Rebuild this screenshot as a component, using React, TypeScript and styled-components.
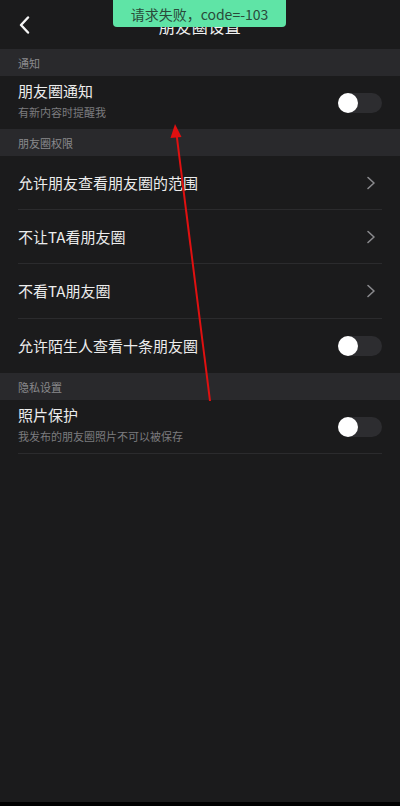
import React from "react";
import styled, { createGlobalStyle } from "styled-components";

const Global = createGlobalStyle`
  html, body { margin: 0; padding: 0; background: #000; }
  body { font-family: "Noto Sans CJK SC", "Noto Sans", sans-serif; -webkit-font-smoothing: antialiased; }
  * { box-sizing: border-box; }
`;

const Page = styled.div`
  position: relative;
  width: 400px;
  height: 802px;
  background: #1b1b1c;
  overflow: hidden;
`;

const Header = styled.div`
  height: 49px;
  display: flex;
  align-items: center;
  justify-content: center;
  position: relative;
  color: #f2f2f2;
  font-size: 16px;
`;

const Back = styled.div`
  position: absolute;
  left: 18px;
  top: 15px;
  width: 16px;
  height: 20px;
  display: flex;
  align-items: center;
`;

const Title = styled.div`
  margin-top: 2px;
  letter-spacing: 0.5px;
`;

const SectionHead = styled.div`
  height: 27px;
  background: #29292c;
  color: #8a8a8d;
  font-size: 11px;
  display: flex;
  align-items: center;
  padding-left: 18px;
`;

const Row = styled.div<{ $h: number; $divider?: boolean }>`
  height: ${(p) => p.$h}px;
  margin: 0 18px;
  display: flex;
  align-items: center;
  justify-content: space-between;
  border-bottom: ${(p) => (p.$divider ? "1px solid #2b2b2d" : "none")};
`;

const Texts = styled.div`
  display: flex;
  flex-direction: column;
  gap: 4px;
  margin-bottom: 6px;
`;

const RowTitle = styled.div`
  color: #ececec;
  font-size: 15px;
  line-height: 20px;
`;

const Sub = styled.div`
  color: #7c7c7f;
  font-size: 11px;
  line-height: 14px;
`;

const Track = styled.div`
  width: 44px;
  height: 20px;
  border-radius: 10px;
  background: #2d2d30;
  display: flex;
  align-items: center;
`;

const Knob = styled.div`
  width: 20px;
  height: 20px;
  border-radius: 50%;
  background: #ffffff;
`;

const ChevronBox = styled.div`
  margin-right: 6px;
  display: flex;
  align-items: center;
`;

const Toast = styled.div`
  position: absolute;
  left: 113px;
  top: 0;
  width: 173px;
  height: 27px;
  background: #5fe4a6;
  border-radius: 0 0 4px 4px;
  color: #2a4a3a;
  font-size: 14px;
  display: flex;
  align-items: center;
  justify-content: center;
  font-family: "Noto Sans CJK SC", "Noto Sans", sans-serif;
`;

const Overlay = styled.svg`
  position: absolute;
  left: 0;
  top: 0;
  pointer-events: none;
`;

const Toggle = () => (
  <Track>
    <Knob />
  </Track>
);

const Chevron = () => (
  <ChevronBox>
    <svg width="10" height="14" viewBox="0 0 10 14">
      <path d="M2 1.5 L8 7 L2 12.5" fill="none" stroke="#8a8a8d" strokeWidth="1.6" strokeLinecap="round" strokeLinejoin="round" />
    </svg>
  </ChevronBox>
);

export default function App() {
  return (
    <>
      <Global />
      <Page>
        <Header>
          <Back>
            <svg width="12" height="18" viewBox="0 0 12 18">
              <path d="M10 1.5 L3 9 L10 16.5" fill="none" stroke="#f5f5f5" strokeWidth="2.4" strokeLinecap="round" strokeLinejoin="round" />
            </svg>
          </Back>
          <Title>朋友圈设置</Title>
        </Header>

        <SectionHead>通知</SectionHead>
        <Row $h={53}>
          <Texts>
            <RowTitle>朋友圈通知</RowTitle>
            <Sub>有新内容时提醒我</Sub>
          </Texts>
          <Toggle />
        </Row>

        <SectionHead>朋友圈权限</SectionHead>
        <Row $h={54} $divider>
          <RowTitle>允许朋友查看朋友圈的范围</RowTitle>
          <Chevron />
        </Row>
        <Row $h={54} $divider>
          <RowTitle>不让TA看朋友圈</RowTitle>
          <Chevron />
        </Row>
        <Row $h={55} $divider>
          <RowTitle>不看TA朋友圈</RowTitle>
          <Chevron />
        </Row>
        <Row $h={54}>
          <RowTitle>允许陌生人查看十条朋友圈</RowTitle>
          <Toggle />
        </Row>

        <SectionHead>隐私设置</SectionHead>
        <Row $h={54} $divider>
          <Texts>
            <RowTitle>照片保护</RowTitle>
            <Sub>我发布的朋友圈照片不可以被保存</Sub>
          </Texts>
          <Toggle />
        </Row>

        <Toast>请求失败，code=-103</Toast>

        <Overlay width="400" height="802" viewBox="0 0 400 802">
          <line x1="210" y1="401" x2="176.5" y2="134" stroke="#e01010" strokeWidth="2" />
          <polygon points="175,124 170.5,138 181.5,137" fill="#e01010" />
        </Overlay>
      </Page>
    </>
  );
}
